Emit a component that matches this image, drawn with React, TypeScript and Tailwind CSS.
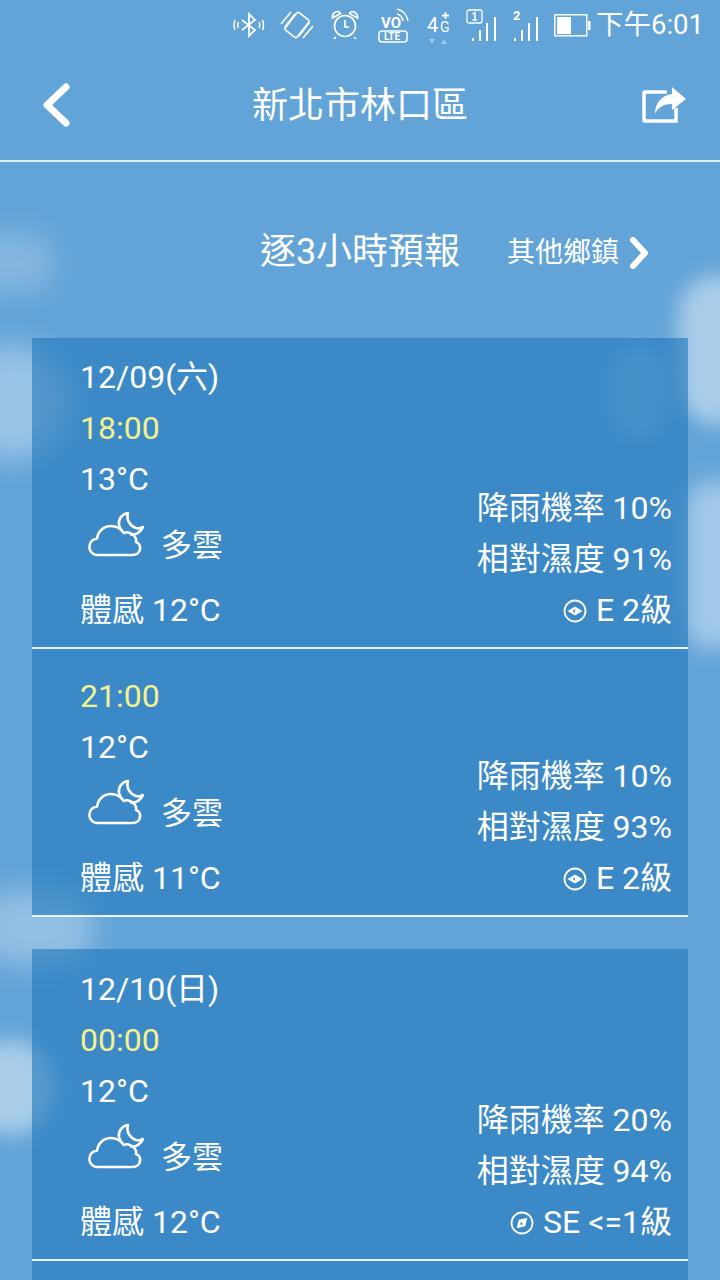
const font = "font-['Roboto','Noto_Sans_CJK_TC',sans-serif]";

interface Forecast {
  date?: string;
  time: string;
  temp: string;
  feels: string;
  rain: string;
  humidity: string;
  wind: string;
  windDir: 'E' | 'SE';
}

const cards: Forecast[][] = [
  [
    { date: '12/09(六)', time: '18:00', temp: '13°C', feels: '體感 12°C', rain: '降雨機率 10%', humidity: '相對濕度 91%', wind: 'E 2級', windDir: 'E' },
    { time: '21:00', temp: '12°C', feels: '體感 11°C', rain: '降雨機率 10%', humidity: '相對濕度 93%', wind: 'E 2級', windDir: 'E' },
  ],
  [
    { date: '12/10(日)', time: '00:00', temp: '12°C', feels: '體感 12°C', rain: '降雨機率 20%', humidity: '相對濕度 94%', wind: 'SE <=1級', windDir: 'SE' },
  ],
];

function CloudMoon() {
  return (
    <svg width="58" height="48" viewBox="0 0 58 48" fill="none" stroke="white" strokeWidth="2.600" strokeLinecap="round" strokeLinejoin="round">
      <path d="M10 44 C3 44 1 38 1.500 35 C2 31 5 28 9 27.500 C10 20 16 15 23 15 C29 15 33 18 36 22 C38 21 41 21 44 23 C47 25 48.500 28 48 31 C51 32 52.500 35 52 38 C51.500 42 48 44 45 44 Z" />
      <path d="M40 2 C34 3 30 8 31 14 C31.500 16 32.500 18 34 20 M40 2 C38 9 42 15 48 17 C51 18 53 17 55 16 C53 21 48 24 43 23.500" />
    </svg>
  );
}

function WindIcon({ dir }: { dir: 'E' | 'SE' }) {
  return (
    <svg width="24" height="24" viewBox="0 0 24 24" fill="none" className="shrink-0">
      <circle cx="12" cy="12" r="10.500" stroke="white" strokeWidth="1.800" />
      <g transform={dir === 'SE' ? 'rotate(-45 12 12)' : undefined}>
        <path d="M4.500 12 L12 7.500 L19.500 12 L12 16.500 Z" fill="white" />
        <path d="M9.500 12 L12 10.300 L12 13.700 Z" fill="#3d8ac7" />
      </g>
    </svg>
  );
}

function StatusIcons() {
  return (
    <div className="flex items-center">
      {/* bluetooth */}
      <svg width="32" height="26" viewBox="0 0 32 26" fill="none" stroke="white" strokeWidth="1.800">
        <path d="M9 8 L22 18 L16 24 V2 L22 8 L9 18" />
        <path d="M5.500 10 Q4 13 5.500 16 M2 8 Q0 13 2 18 M26 10 Q27.500 13 26 16 M29.500 8 Q31.500 13 29.500 18" strokeWidth="1.500" />
      </svg>
      {/* vibrate */}
      <svg width="34" height="32" viewBox="0 0 34 32" fill="none" stroke="white" strokeWidth="1.600" className="ml-[15px]">
        <rect x="9.500" y="5" width="15" height="22" rx="2" transform="rotate(38 17 16)" />
        <path d="M1 15 L11 3 M4.500 18.500 L15 5 M33 17 L23 29 M29.500 13.500 L19 27" />
      </svg>
      {/* alarm */}
      <svg width="28" height="30" viewBox="0 0 28 30" fill="none" stroke="white" strokeWidth="1.700" className="ml-[17px]">
        <circle cx="14" cy="16" r="10.500" />
        <path d="M14 10 V17 H18 M5 27 L3 29 M23 27 L25 29" />
        <path d="M1.500 8 Q1 3 6 1.500 Q8.500 1.500 9.500 3.500 Z M26.500 8 Q27 3 22 1.500 Q19.500 1.500 18.500 3.500 Z" />
      </svg>
      {/* volte */}
      <div className="relative ml-[19px] h-[36px] w-[31px]">
        <svg width="31" height="36" viewBox="0 0 31 36" fill="none" stroke="white" strokeWidth="1.500" className="absolute left-0 top-0">
          <path d="M19 7 Q24 8 25 14 M19 2 Q28 4 30 14" />
          <rect x="1" y="24" width="28" height="11" rx="3" />
        </svg>
        <span className={`absolute left-[3px] top-[9px] text-[15px] leading-[15px] font-bold text-white ${font}`}>VO</span>
        <span className={`absolute left-[6px] top-[25px] text-[10px] leading-[10px] font-bold text-white ${font}`}>LTE</span>
      </div>
      {/* 4G */}
      <div className="relative ml-[18px] h-[28px] w-[25px]">
        <span className={`absolute left-0 top-[4px] text-[20px] leading-[20px] text-white ${font}`}>4</span>
        <span className={`absolute left-[13px] top-[9px] text-[14px] leading-[14px] text-white ${font}`}>G</span>
        <svg width="9" height="9" viewBox="0 0 9 9" fill="none" stroke="white" strokeWidth="1.800" className="absolute left-[14px] top-0">
          <path d="M4.500 1 V8 M1 4.500 H8" />
        </svg>
        <svg width="22" height="7" viewBox="0 0 22 7" className="absolute left-[2px] top-[28px]">
          <path d="M0 0 H6 L3 5 Z M12 5 H18 L15 0 Z" fill="white" fillOpacity="0.4" />
        </svg>
      </div>
      {/* sim 1 */}
      <svg width="34" height="32" viewBox="0 0 34 32" fill="none" stroke="white" className="ml-[14px]">
        <rect x="1" y="1" width="15" height="13" rx="2" strokeWidth="1.300" />
        <path d="M6.500 5 L9 3.800 V11 M6.500 11 H11" strokeWidth="1.600" />
        <path d="M7 29 V32 M14 21 V32 M21 14 V32 M29 8 V32" strokeWidth="2" />
      </svg>
      {/* sim 2 */}
      <div className="relative ml-[13px] h-[32px] w-[29px]">
        <span className={`absolute left-0 top-0 text-[13px] leading-[13px] font-bold text-white ${font}`}>2</span>
        <svg width="29" height="32" viewBox="0 0 29 32" fill="none" stroke="white" strokeWidth="2" className="absolute left-0 top-0">
          <path d="M2 29 V32 M9 21 V32 M16 14 V32 M24 8 V32" />
        </svg>
      </div>
      {/* battery */}
      <svg width="37" height="23" viewBox="0 0 37 23" fill="none" className="ml-[12px]">
        <rect x="0.800" y="0.800" width="32" height="21" stroke="white" strokeWidth="1.400" />
        <rect x="3" y="3" width="14" height="17" fill="white" />
        <rect x="34" y="7" width="2.500" height="9" fill="white" />
      </svg>
    </div>
  );
}

function Row({ f, pt }: { f: Forecast; pt: string }) {
  return (
    <div className={`flex justify-between border-b-2 border-white/90 pr-[16px] pl-[48px] pb-[11px] ${pt}`}>
      <div className="flex flex-col">
        {f.date && <div className="h-[51px] leading-[51px]">{f.date}</div>}
        <div className="h-[51px] leading-[51px] text-[#f4f18f]">{f.time}</div>
        <div className="h-[51px] leading-[51px]">{f.temp}</div>
        <div className="flex h-[80px] items-start pl-[8px]">
          <div className="pt-[6px]"><CloudMoon /></div>
          <span className="ml-[15px] pt-[15px] text-[31px] leading-[51px]">多雲</span>
        </div>
        <div className="h-[51px] leading-[51px]">{f.feels}</div>
      </div>
      <div className="flex flex-col items-end justify-end">
        <div className="h-[51px] leading-[51px]">{f.rain}</div>
        <div className="h-[51px] leading-[51px]">{f.humidity}</div>
        <div className="flex h-[51px] items-center gap-[9px] leading-[51px]">
          <WindIcon dir={f.windDir} />
          <span>{f.wind}</span>
        </div>
      </div>
    </div>
  );
}

export default function App() {
  return (
    <div className={`relative h-[1280px] w-[720px] overflow-hidden bg-[#63a4d8] text-white ${font}`}>
      {/* clouds */}
      <div className="absolute -left-[50px] top-[232px] h-[62px] w-[105px] rounded-full bg-white/20 blur-[12px]" />
      <div className="absolute -left-[45px] top-[345px] h-[115px] w-[115px] rounded-full bg-white/35 blur-[14px]" />
      <div className="absolute left-[678px] top-[275px] h-[150px] w-[80px] rounded-full bg-white/45 blur-[10px]" />
      <div className="absolute left-[608px] top-[345px] h-[95px] w-[60px] rounded-full bg-white/15 blur-[7px]" />
      <div className="absolute left-[684px] top-[480px] h-[170px] w-[60px] rounded-full bg-white/40 blur-[11px]" />
      <div className="absolute -left-[20px] top-[890px] h-[75px] w-[115px] rounded-full bg-white/30 blur-[13px]" />
      <div className="absolute -left-[35px] top-[1040px] h-[95px] w-[90px] rounded-full bg-white/45 blur-[10px]" />

      <div className="relative flex flex-col">
        {/* status bar */}
        <div className="flex h-[50px] items-center justify-end pr-[16px]">
          <StatusIcons />
          <span className="ml-[5px] text-[27.5px] leading-[50px]">下午6:01</span>
        </div>

        {/* header */}
        <div className="flex h-[112px] items-center justify-between border-b-2 border-white/80 pr-[34px] pl-[42px]">
          <div className="w-[36px]">
            <svg width="28" height="44" viewBox="0 0 28 44" fill="none" stroke="white" strokeWidth="7" strokeLinecap="round" strokeLinejoin="round">
              <path d="M24 4 L5 22 L24 40" />
            </svg>
          </div>
          <h1 className="pt-[2px] text-[36px] font-normal">新北市林口區</h1>
          <svg width="44" height="36" viewBox="0 0 44 36" fill="none">
            <path d="M25 5 H3 Q2 5 2 6 V33 Q2 34 3 34 H34 V21" stroke="white" strokeWidth="3.500" />
            <path d="M30 0 L44 12 L30 23 V17 C22 17 16 20 13 27 C13 17 19 8 30 7 Z" fill="white" />
          </svg>
        </div>

        {/* section title */}
        <div className="relative flex h-[176px] items-center justify-center">
          <h2 className="pt-[3px] text-[36px] font-normal">逐3小時預報</h2>
          <div className="absolute left-[507px] top-[70px] flex items-center">
            <span className="text-[28px] font-normal">其他鄉鎮</span>
            <svg width="20" height="32" viewBox="0 0 20 32" fill="none" stroke="white" strokeWidth="6" strokeLinecap="round" strokeLinejoin="round" className="ml-[10px]">
              <path d="M4 3 L16 16 L4 29" />
            </svg>
          </div>
        </div>

        {/* forecast cards */}
        <div className="flex flex-col gap-[32px] px-[32px] text-[32px]">
          <div className="bg-[#2278bc]/60">
            <Row f={cards[0][0]} pt="pt-[14px]" />
            <Row f={cards[0][1]} pt="pt-[22px]" />
          </div>
          <div className="bg-[#2278bc]/60">
            <Row f={cards[1][0]} pt="pt-[15px]" />
            <div className="h-[60px]" />
          </div>
        </div>
      </div>
    </div>
  );
}
